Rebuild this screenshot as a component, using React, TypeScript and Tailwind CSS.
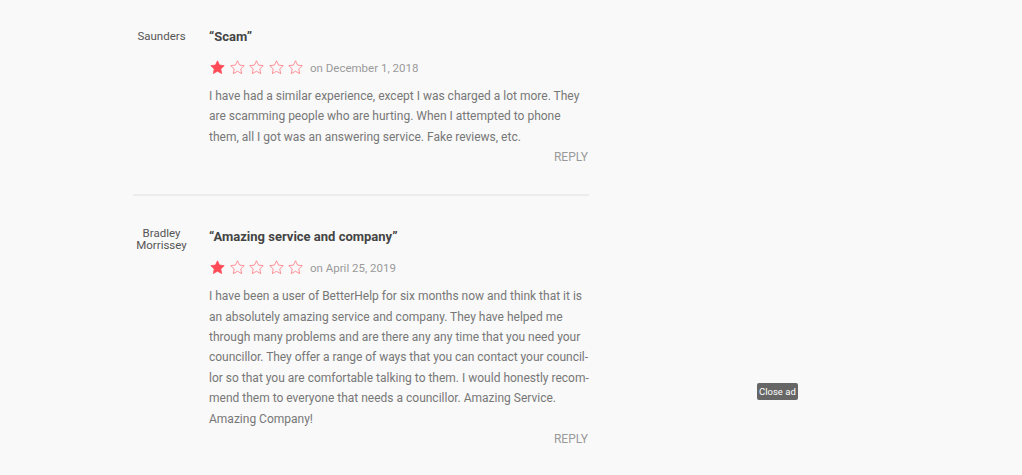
import React from "react";

function Stars() {
  const path =
    "M12 2.5l2.9 6.1 6.6.8-4.9 4.6 1.3 6.6L12 17.3l-5.9 3.3 1.3-6.6L2.5 9.4l6.6-.8z";
  return (
    <div className="flex items-center gap-[2.5px] -mt-[2px]">
      {[0, 1, 2, 3, 4].map((i) => (
        <svg key={i} width="17" height="17" viewBox="0 0 24 24">
          <path
            d={path}
            fill={i === 0 ? "#ff4a57" : "none"}
            stroke="#ff4a57"
            strokeWidth={i === 0 ? 1 : 1.1}
            strokeLinejoin="miter"
            opacity={i === 0 ? 1 : 0.75}
          />
        </svg>
      ))}
    </div>
  );
}

function Review({
  name,
  namePad,
  title,
  date,
  body,
}: {
  name: React.ReactNode;
  namePad: string;
  title: string;
  date: string;
  body: React.ReactNode;
}) {
  return (
    <div className="flex">
      <div
        className={`w-[57px] shrink-0 text-center text-[11.5px] leading-[12px] text-[#555] ${namePad}`}
      >
        {name}
      </div>
      <div className="ml-[19px] flex-1">
        <div className="text-[13px] font-bold text-[#444] leading-[18px] pt-[1px]">
          {title}
        </div>
        <div className="flex items-center mt-[13px] h-[18px]">
          <Stars />
          <span className="ml-[6px] text-[11.5px] text-[#999] pt-[1px]">on {date}</span>
        </div>
        <p className="mt-[9px] text-[12px] leading-[20.4px] text-[#777]">{body}</p>
        <div className="text-right text-[12px] text-[#999] leading-[16px] mt-[2px] pr-[1px]">
          REPLY
        </div>
      </div>
    </div>
  );
}

export default function App() {
  return (
    <div
      className="relative w-[1022px] h-[475px] bg-[#f9f9f9] overflow-hidden"
      style={{ fontFamily: "Roboto, 'Liberation Sans', sans-serif" }}
      lang="en"
    >
      <div className="ml-[133px] w-[456px] pt-[27px]">
        <Review
          name="Saunders"
          namePad="pt-[3px]"
          title="“Scam”"
          date="December 1, 2018"
          body="I have had a similar experience, except I was charged a lot more. They are scamming people who are hurting. When I attempted to phone them, all I got was an answering service. Fake reviews, etc."
        />
        <div className="mt-[29px] h-[2px] bg-[#ececec]" />
        <div className="pt-[31px]">
          <Review
            name={
              <>
                Bradley
                <br />
                Morrissey
              </>
            }
            namePad="pt-0"
            title="“Amazing service and company”"
            date="April 25, 2019"
            body={
              <>
                I have been a user of BetterHelp for six months now and think that it is
                <br />
                an absolutely amazing service and company. They have helped me
                <br />
                through many problems and are there any any time that you need your
                <br />
                <span className="tracking-[-0.03px] whitespace-nowrap">
                  councillor. They offer a range of ways that you can contact your council-
                </span>
                <br />
                <span className="whitespace-nowrap">
                  lor so that you are comfortable talking to them. I would honestly recom-
                </span>
                <br />
                mend them to everyone that needs a councillor. Amazing Service.
                <br />
                Amazing Company!
              </>
            }
          />
        </div>
      </div>
      <div className="absolute left-[757px] top-[383px] h-[17px] px-[2px] rounded-[2px] bg-[#666] text-white text-[9.5px] leading-[17px]">
        Close ad
      </div>
    </div>
  );
}
